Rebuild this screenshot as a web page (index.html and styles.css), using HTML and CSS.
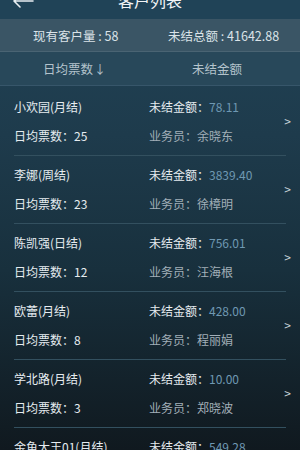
FILE: index.html
```html
<!DOCTYPE html>
<html lang="zh-CN">
<head>
<meta charset="utf-8">
<title>客户列表</title>
<meta name="viewport" content="width=device-width,initial-scale=1">
<link rel="stylesheet" href="styles.css">
</head>
<body>

<header class="topbar">
  <svg class="back" width="22" height="14" viewBox="0 0 22 14" fill="none" stroke="#e8eef2" stroke-width="1.6" stroke-linecap="round" stroke-linejoin="round">
    <path d="M2 7h19M8 1L2 7l6 6"/>
  </svg>
  <h1>客户列表</h1>
</header>

<div class="summary">
  <span>现有客户量 : 58</span>
  <span>未结总额 : 41642.88</span>
</div>

<div class="sortbar">
  <span class="sort-active">日均票数<i class="down">↓</i></span>
  <span class="sort-other">未结金额</span>
</div>

<ul class="clients">
  <li class="client">
    <div class="cell name">小欢园(月结)</div>
    <div class="cell">未结金额：<b class="amount">78.11</b></div>
    <div class="cell">日均票数：25</div>
    <div class="cell muted">业务员：余晓东</div>
    <span class="chev">&gt;</span>
  </li>
  <li class="client">
    <div class="cell name">李娜(周结)</div>
    <div class="cell">未结金额：<b class="amount">3839.40</b></div>
    <div class="cell">日均票数：23</div>
    <div class="cell muted">业务员：徐樟明</div>
    <span class="chev">&gt;</span>
  </li>
  <li class="client">
    <div class="cell name">陈凯强(日结)</div>
    <div class="cell">未结金额：<b class="amount">756.01</b></div>
    <div class="cell">日均票数：12</div>
    <div class="cell muted">业务员：汪海根</div>
    <span class="chev">&gt;</span>
  </li>
  <li class="client">
    <div class="cell name">欧蕾(月结)</div>
    <div class="cell">未结金额：<b class="amount">428.00</b></div>
    <div class="cell">日均票数：8</div>
    <div class="cell muted">业务员：程丽娟</div>
    <span class="chev">&gt;</span>
  </li>
  <li class="client">
    <div class="cell name">学北路(月结)</div>
    <div class="cell">未结金额：<b class="amount">10.00</b></div>
    <div class="cell">日均票数：3</div>
    <div class="cell muted">业务员：郑晓波</div>
    <span class="chev">&gt;</span>
  </li>
  <li class="client">
    <div class="cell name">金鱼大王01(月结)</div>
    <div class="cell">未结金额：<b class="amount">549.28</b></div>
    <div class="cell">日均票数：5</div>
    <div class="cell muted">业务员：余晓东</div>
    <span class="chev">&gt;</span>
  </li>
</ul>

</body>
</html>
```

FILE: styles.css
```css
/* Reset & Base */
*,*::before,*::after{box-sizing:border-box;margin:0;padding:0}
body{
  font-family:"Noto Sans CJK SC","Noto Sans",sans-serif;
  background:linear-gradient(180deg,#214356 0%,#1e3b4c 30%,#18303d 60%,#10191f 100%);
  color:#e6ecf0;
  width:300px;height:450px;overflow:hidden;
}
/* Top bar */
.topbar{
  height:19px;
  background:#204357;
  display:flex;align-items:flex-end;justify-content:center;
  overflow:hidden;
}
.topbar h1{font-size:16px;font-weight:400;line-height:22px;margin-bottom:8px;color:#f2f5f7}
.back{position:absolute;left:12px;top:-6px}
/* Summary */
.summary{
  height:33px;
  background:#3a5565;
  border-bottom:1px solid #4a6473;
  display:grid;grid-template-columns:135px 1fr;
  align-items:center;
  font-size:12.5px;color:#dbe3e8;
}
.summary span:first-child{padding-left:33px}
.summary span:last-child{padding-left:33px}
/* Sort bar */
.sortbar{
  height:34px;
  background:#28485a;
  border-bottom:1px solid #37566a;
  display:grid;grid-template-columns:192px 1fr;
  align-items:center;
  font-size:12.5px;color:#b4c3cc;
}
.sort-active{padding-left:43px}
.down{font-style:normal;font-size:12px;margin-left:1px}
/* Client list */
.clients{list-style:none;padding:2px 14px 0}
.client{
  position:relative;
  display:grid;grid-template-columns:135px 1fr;
  grid-auto-rows:29px;align-items:center;
  padding:4px 0 5px;
  border-bottom:1px solid #33505f;
  font-size:12px;
}
.cell{white-space:nowrap}
.amount{font-weight:400;color:#6f98b2}
.muted{color:#a2afb8}
.chev{
  position:absolute;right:-5px;top:24px;
  font-size:12px;color:#c9d3d9;
}
```
